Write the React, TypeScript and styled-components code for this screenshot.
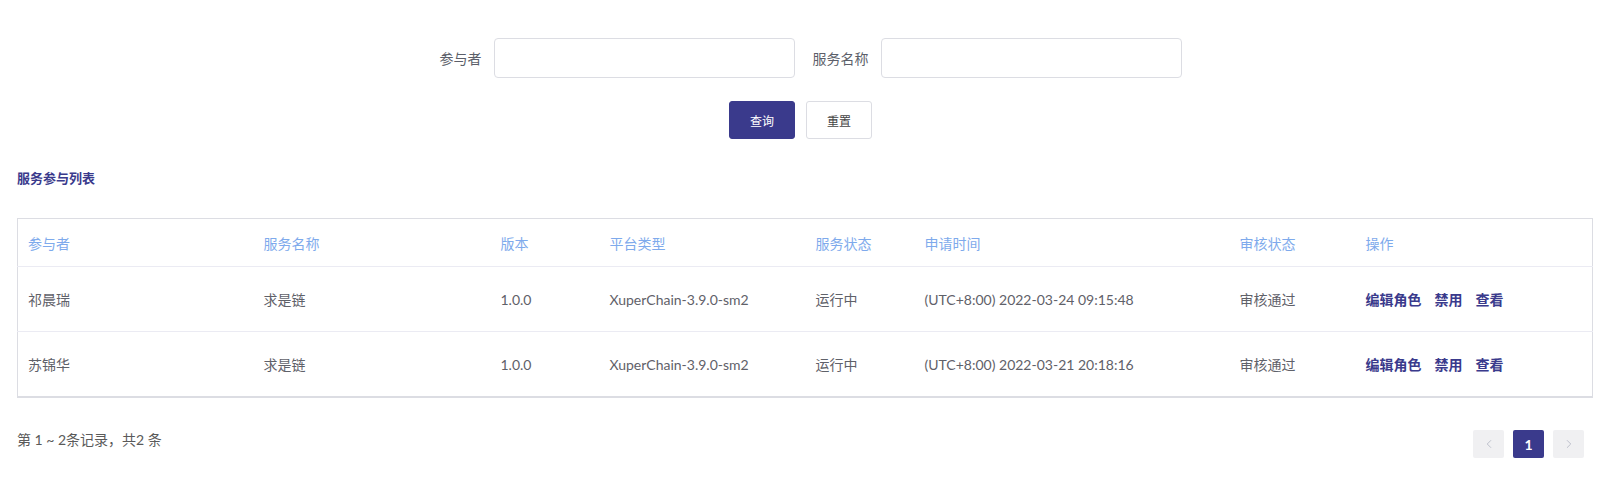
import React from 'react';
import styled, { createGlobalStyle } from 'styled-components';
import { ChevronLeft, ChevronRight } from 'lucide-react';

const colors = {
  primary: '#3a3a8c',
  headText: '#7eaaec',
  text: '#5f6169',
  border: '#dcdde3',
  rowLine: '#ebebf3',
  pagerBg: '#f0f0f2',
  pagerIcon: '#b6b9c6',
};

const GlobalStyle = createGlobalStyle`
  body {
    margin: 0;
    background: #fff;
    font-family: Lato, "Noto Sans CJK SC", sans-serif;
    color: ${colors.text};
  }
`;

const Page = styled.div`
  padding: 38px 15px 0 17px;
  box-sizing: border-box;
  width: 1607px;
`;

const FilterForm = styled.div`
  display: flex;
  justify-content: center;
  align-items: center;
  padding-left: 12px;
`;

const Field = styled.label`
  display: flex;
  align-items: center;
  gap: 12px;
  & + & {
    margin-left: 18px;
  }
`;

const FieldLabel = styled.span`
  font-size: 14px;
  color: #5c5f6a;
`;

const Input = styled.input`
  width: 301px;
  height: 40px;
  box-sizing: border-box;
  border: 1px solid ${colors.border};
  border-radius: 4px;
  outline: none;
  padding: 0 10px;
  font: inherit;
`;

const ButtonRow = styled.div`
  display: flex;
  justify-content: center;
  gap: 11px;
  margin-top: 23px;
  padding-right: 8px;
`;

const Button = styled.button<{ $primary?: boolean }>`
  width: 66px;
  height: 38px;
  border-radius: 3px;
  font-family: inherit;
  font-size: 12px;
  cursor: pointer;
  border: 1px solid ${(p) => (p.$primary ? colors.primary : colors.border)};
  background: ${(p) => (p.$primary ? colors.primary : '#fff')};
  color: ${(p) => (p.$primary ? '#fff' : '#444')};
`;

const SectionTitle = styled.h3`
  margin: 29px 0 0;
  font-size: 13px;
  line-height: 20px;
  font-weight: 700;
  color: ${colors.primary};
`;

const Table = styled.table`
  margin-top: 30px;
  width: 100%;
  border-collapse: collapse;
  border: 1px solid ${colors.border};
  border-bottom-width: 2px;
  table-layout: fixed;
  font-size: 14px;
`;

const HeadCell = styled.th<{ $w: number }>`
  box-sizing: border-box;
  width: ${(p) => p.$w}px;
  height: 48px;
  padding: 0 10px;
  text-align: left;
  font-weight: 400;
  color: ${colors.headText};
  border-bottom: 1px solid ${colors.rowLine};
`;

const Cell = styled.td`
  height: 64px;
  padding: 0 10px;
  color: ${colors.text};
  white-space: nowrap;
`;

const Row = styled.tr`
  & + & td {
    border-top: 1px solid ${colors.rowLine};
  }
`;

const Actions = styled.div`
  display: flex;
  gap: 13px;
`;

const ActionLink = styled.a`
  color: ${colors.primary};
  font-weight: 700;
  cursor: pointer;
`;

const Footer = styled.div`
  display: flex;
  justify-content: space-between;
  align-items: flex-start;
  margin-top: 32px;
  padding-right: 8px;
`;

const Summary = styled.span`
  font-size: 14px;
  line-height: 20px;
  color: #5a5a5a;
`;

const Pager = styled.div`
  display: flex;
  gap: 9px;
`;

const PageButton = styled.button<{ $active?: boolean }>`
  width: 31px;
  height: 28px;
  border: none;
  border-radius: 2px;
  display: flex;
  align-items: center;
  justify-content: center;
  padding: 0;
  font-family: inherit;
  font-size: 14px;
  font-weight: 700;
  background: ${(p) => (p.$active ? colors.primary : colors.pagerBg)};
  color: ${(p) => (p.$active ? '#fff' : colors.pagerIcon)};
`;

const columns = [
  { title: '参与者', w: 236 },
  { title: '服务名称', w: 237 },
  { title: '版本', w: 109 },
  { title: '平台类型', w: 206 },
  { title: '服务状态', w: 109 },
  { title: '申请时间', w: 315 },
  { title: '审核状态', w: 126 },
  { title: '操作', w: 237 },
];

const rows = [
  { name: '祁晨瑞', time: '(UTC+8:00) 2022-03-24 09:15:48' },
  { name: '苏锦华', time: '(UTC+8:00) 2022-03-21 20:18:16' },
];

export default function App() {
  return (
    <Page>
      <GlobalStyle />
      <FilterForm>
        <Field>
          <FieldLabel>参与者</FieldLabel>
          <Input />
        </Field>
        <Field>
          <FieldLabel>服务名称</FieldLabel>
          <Input />
        </Field>
      </FilterForm>
      <ButtonRow>
        <Button $primary>查询</Button>
        <Button>重置</Button>
      </ButtonRow>

      <SectionTitle>服务参与列表</SectionTitle>

      <Table>
        <thead>
          <tr>
            {columns.map((c) => (
              <HeadCell key={c.title} $w={c.w}>
                {c.title}
              </HeadCell>
            ))}
          </tr>
        </thead>
        <tbody>
          {rows.map((r) => (
            <Row key={r.name}>
              <Cell>{r.name}</Cell>
              <Cell>求是链</Cell>
              <Cell>1.0.0</Cell>
              <Cell>XuperChain-3.9.0-sm2</Cell>
              <Cell>运行中</Cell>
              <Cell>{r.time}</Cell>
              <Cell>审核通过</Cell>
              <Cell>
                <Actions>
                  <ActionLink>编辑角色</ActionLink>
                  <ActionLink>禁用</ActionLink>
                  <ActionLink>查看</ActionLink>
                </Actions>
              </Cell>
            </Row>
          ))}
        </tbody>
      </Table>

      <Footer>
        <Summary>第 1 ~ 2条记录，共2 条</Summary>
        <Pager>
          <PageButton>
            <ChevronLeft size={14} strokeWidth={1.5} />
          </PageButton>
          <PageButton $active>1</PageButton>
          <PageButton>
            <ChevronRight size={14} strokeWidth={1.5} />
          </PageButton>
        </Pager>
      </Footer>
    </Page>
  );
}
